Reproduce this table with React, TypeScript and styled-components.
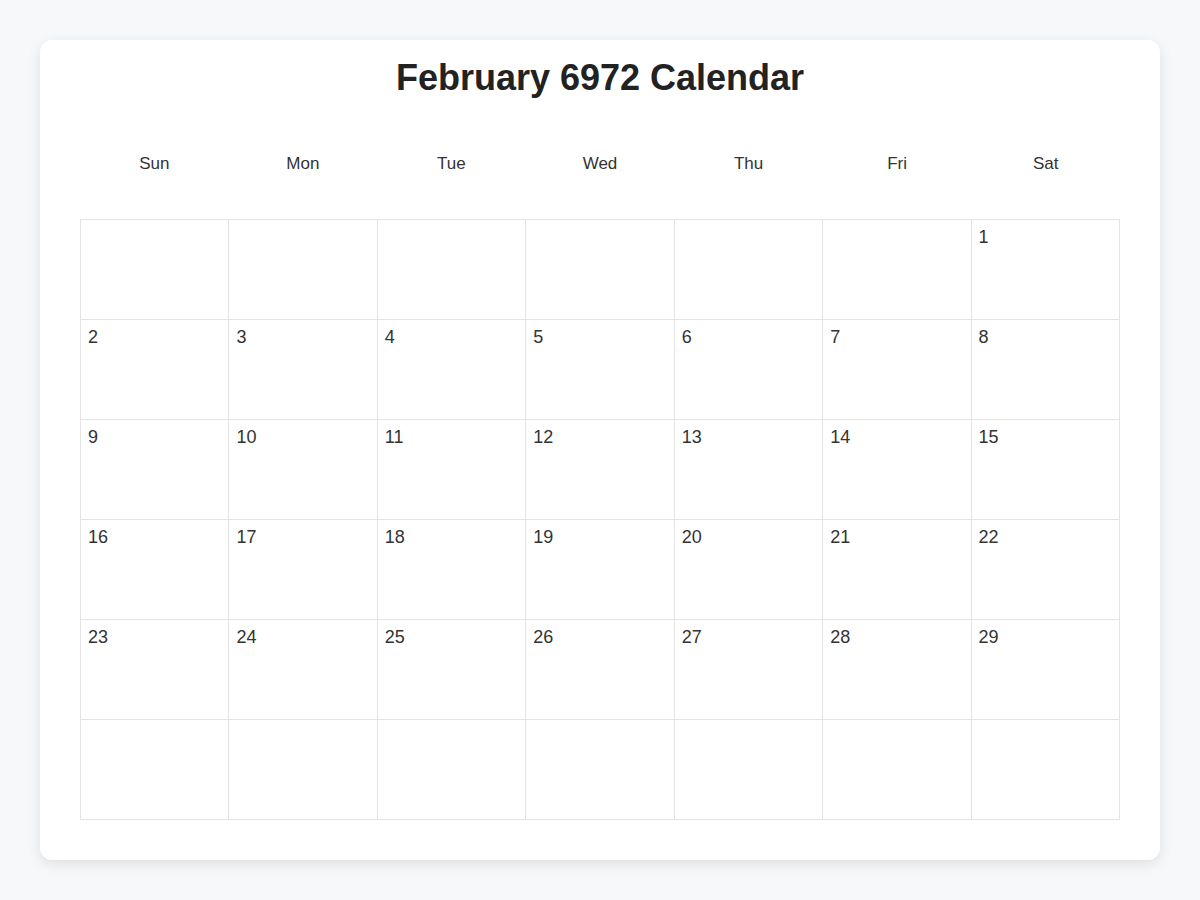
import React from "react";
import styled, { createGlobalStyle } from "styled-components";

const Global = createGlobalStyle`
  html, body { margin: 0; padding: 0; background: #f7f8fa; }
  body { font-family: "Liberation Sans", Arial, sans-serif; color: #333; }
`;

const Page = styled.div`
  padding: 40px;
`;

const Card = styled.div`
  background: #fff;
  border-radius: 12px;
  box-shadow: 0 4px 14px rgba(0, 0, 0, 0.1);
  padding: 17px 40px 40px;
`;

const Title = styled.h1`
  margin: 0 0 30px;
  text-align: center;
  font-size: 36px;
  line-height: 41px;
  font-weight: 700;
  color: #222;
`;

const HeaderRow = styled.div`
  display: grid;
  grid-template-columns: repeat(7, 1fr);
  height: 72px;
  margin-bottom: 19px;
`;

const DayName = styled.div`
  display: flex;
  align-items: center;
  justify-content: center;
  font-size: 17px;
  color: #333;
`;

const Grid = styled.div`
  display: grid;
  grid-template-columns: repeat(7, 1fr);
  grid-auto-rows: 100px;
  border-top: 1px solid #e3e3e3;
  border-left: 1px solid #e3e3e3;
`;

const Cell = styled.div`
  border-right: 1px solid #e3e3e3;
  border-bottom: 1px solid #e3e3e3;
  padding: 8px 7px;
  font-size: 18px;
  line-height: 18px;
  color: #333;
`;

const days = ["Sun", "Mon", "Tue", "Wed", "Thu", "Fri", "Sat"];

export default function App() {
  const cells: (number | null)[] = [];
  for (let i = 0; i < 6; i++) cells.push(null);
  for (let d = 1; d <= 29; d++) cells.push(d);
  while (cells.length < 42) cells.push(null);
  return (
    <Page>
      <Global />
      <Card>
        <Title>February 6972 Calendar</Title>
        <HeaderRow>
          {days.map((d) => (
            <DayName key={d}>{d}</DayName>
          ))}
        </HeaderRow>
        <Grid>
          {cells.map((c, i) => (
            <Cell key={i}>{c ?? ""}</Cell>
          ))}
        </Grid>
      </Card>
    </Page>
  );
}
